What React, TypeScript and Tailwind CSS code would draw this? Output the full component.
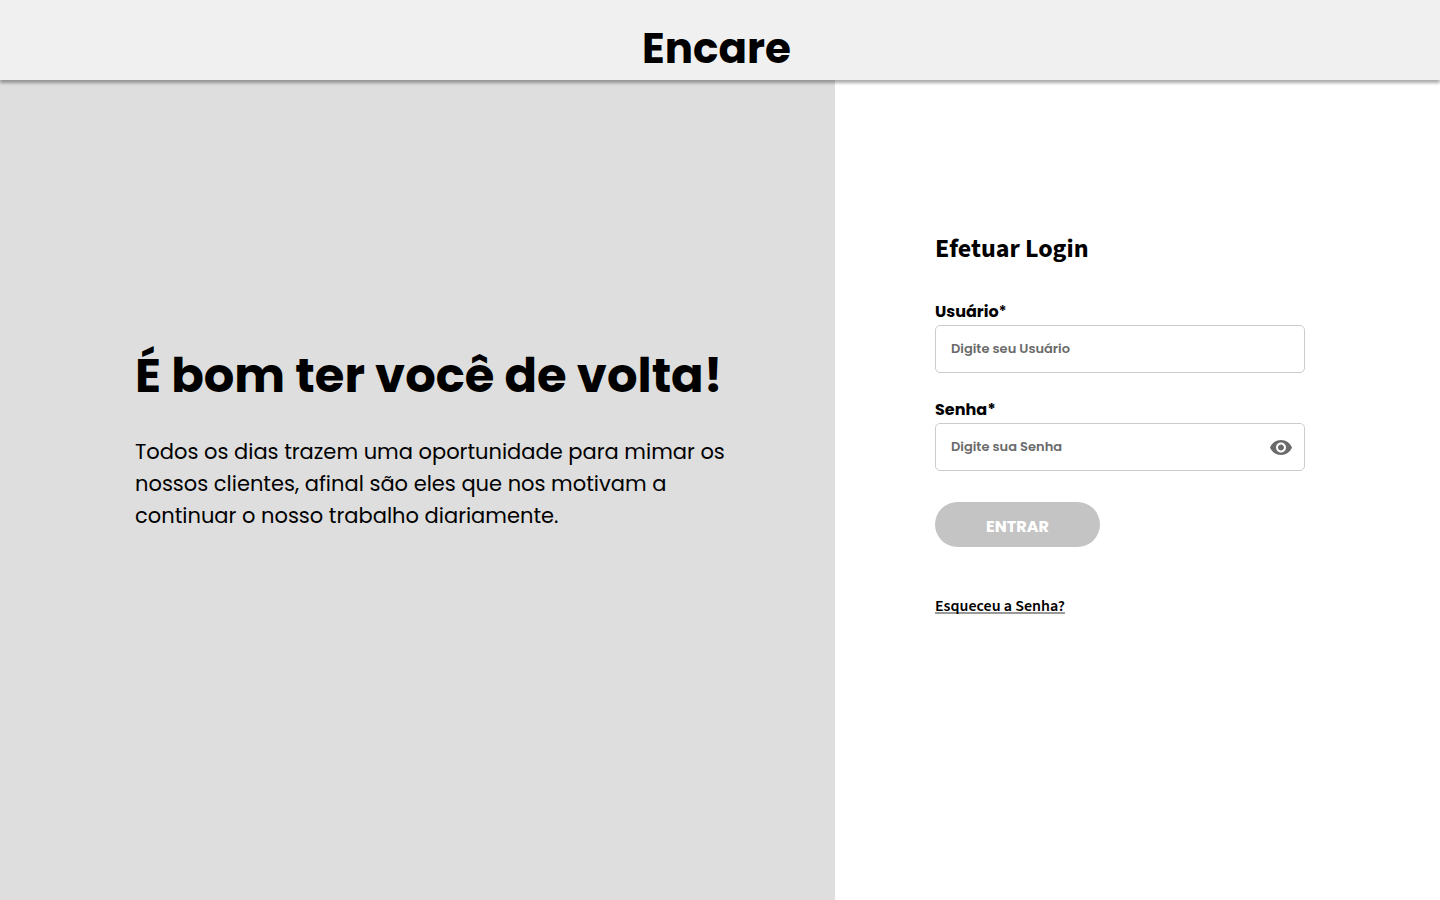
import React from "react";

function Eye() {
  return (
    <svg className="h-6 w-6 shrink-0" viewBox="0 -0.5 24 24" fill="#6b6b6b">
      <path d="M12 4.5C7 4.5 2.73 7.61 1 12c1.73 4.39 6 7.5 11 7.5s9.27-3.11 11-7.5c-1.73-4.39-6-7.5-11-7.5zM12 17c-2.76 0-5-2.24-5-5s2.24-5 5-5 5 2.24 5 5-2.24 5-5 5zm0-8c-1.66 0-3 1.34-3 3s1.34 3 3 3 3-1.34 3-3-1.34-3-3-3z" />
    </svg>
  );
}

export default function App() {
  return (
    <div className="flex h-screen flex-col overflow-hidden bg-white font-['Poppins','Open_Sans',sans-serif] text-black">
      <header className="z-10 flex h-20 shrink-0 justify-center bg-[#f0f0f0] pt-[17px] pr-[7px] shadow-[0_3px_3px_rgba(0,0,0,0.33)]">
        <h1 className="text-[42px] leading-[63px] font-bold whitespace-nowrap">Encare</h1>
      </header>
      <main className="flex flex-1">
        <section className="w-[835px] bg-[#dedede] pt-[260px] pl-[135px]">
          <h2 className="text-[48px] leading-[72px] font-bold whitespace-nowrap">É bom ter você de volta!</h2>
          <p className="mt-6 text-[21px] leading-8 whitespace-nowrap">
            Todos os dias trazem uma oportunidade para mimar os<br />
            nossos clientes, afinal são eles que nos motivam a<br />
            continuar o nosso trabalho diariamente.
          </p>
        </section>
        <section className="flex w-[470px] flex-col items-start pt-[150px] pl-[100px]">
          <h3 className="font-['Source_Sans_Pro','Source_Sans_3','Noto_Sans_CJK_SC',sans-serif] text-[26px] leading-[38px] font-bold">Efetuar Login</h3>
          <label className="mt-8 text-[16px] leading-6 font-bold">Usuário<span className="text-[15px] font-semibold">*</span></label>
          <div className="mt-px flex h-12 w-[370px] items-center rounded-[5px] border border-[#cccccc] px-[15px] text-[13px] font-semibold text-[#6b6b6b]">Digite seu Usuário</div>
          <label className="mt-[25px] text-[16px] leading-6 font-bold">Senha*</label>
          <div className="mt-px flex h-12 w-[370px] items-center justify-between rounded-[5px] border border-[#cccccc] pr-[11px] pl-[15px] text-[13px] font-semibold text-[#6b6b6b]">Digite sua Senha<Eye /></div>
          <button className="mt-[31px] h-[45px] w-[165px] rounded-full bg-[#c4c4c4] pt-1 text-[16px] font-bold text-white">ENTRAR</button>
          <a className="mt-[47px] font-['Source_Sans_Pro','Source_Sans_3','Noto_Sans_CJK_SC',sans-serif] text-[16px] leading-6 font-semibold underline decoration-[#999999] decoration-2 underline-offset-1 [text-decoration-skip-ink:none]">Esqueceu a Senha?</a>
        </section>
      </main>
    </div>
  );
}
